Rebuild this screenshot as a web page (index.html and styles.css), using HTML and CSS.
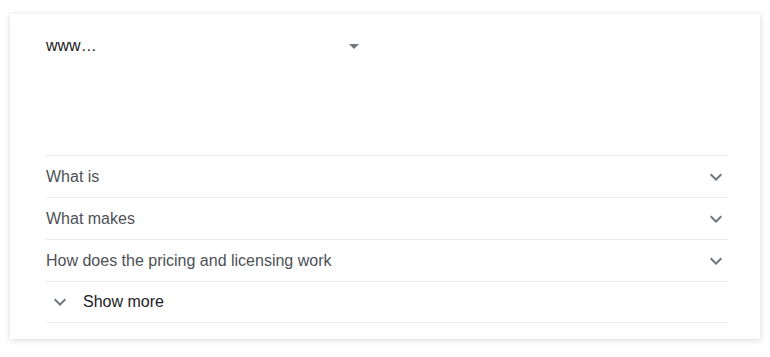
FILE: index.html
```html
<!DOCTYPE html>
<html lang="en">
<head>
    <meta charset="UTF-8">
    <title>People also ask</title>
    <link rel="stylesheet" href="styles.css">
</head>
<body>
    <div class="card">
        <div class="top">
            <div class="source">
                <span class="url">www…</span>
                <span class="caret"></span>
            </div>
        </div>

        <div class="faq">
            <div class="faq-row">
                <span class="question">What is</span>
                <svg class="chevron" width="24" height="24" viewBox="0 0 24 24"><path d="M7.4 8.6L12 13.2l4.6-4.6L18 10l-6 6-6-6z"/></svg>
            </div>
            <div class="faq-row">
                <span class="question">What makes</span>
                <svg class="chevron" width="24" height="24" viewBox="0 0 24 24"><path d="M7.4 8.6L12 13.2l4.6-4.6L18 10l-6 6-6-6z"/></svg>
            </div>
            <div class="faq-row">
                <span class="question">How does the pricing and licensing work</span>
                <svg class="chevron" width="24" height="24" viewBox="0 0 24 24"><path d="M7.4 8.6L12 13.2l4.6-4.6L18 10l-6 6-6-6z"/></svg>
            </div>
            <div class="faq-row more">
                <svg class="chevron" width="24" height="24" viewBox="0 0 24 24"><path d="M7.4 8.6L12 13.2l4.6-4.6L18 10l-6 6-6-6z"/></svg>
                <span class="more-label">Show more</span>
            </div>
        </div>
    </div>
</body>
</html>
```

FILE: styles.css
```css
/* 基础样式 */
body {
    margin: 0;
    padding: 14px 10px;
    background: #ffffff;
    font-family: Arial, "Liberation Sans", sans-serif;
}

.card {
    width: 750px;
    height: 325px;
    box-sizing: border-box;
    padding: 0 32px 0 36px;
    background: #ffffff;
    box-shadow: 0 1px 6px rgba(32, 33, 36, 0.18);
}

.top {
    height: 141px;
    box-sizing: border-box;
    padding-top: 22px;
}

.source {
    display: flex;
    align-items: center;
    height: 20px;
}

.url {
    font-size: 16px;
    color: #202124;
    width: 303px;
}

.caret {
    width: 0;
    height: 0;
    border-left: 5px solid transparent;
    border-right: 5px solid transparent;
    border-top: 5px solid #70757a;
}

.faq-row {
    display: flex;
    align-items: center;
    justify-content: space-between;
    height: 41px;
    border-top: 1px solid #ebebeb;
}

.faq-row:last-child {
    height: 40px;
    border-bottom: 1px solid #ebebeb;
    justify-content: flex-start;
}

.question {
    font-size: 16px;
    color: #4d5156;
    padding-top: 1px;
}

.chevron {
    fill: #70757a;
    margin-right: 0;
}

.more .chevron {
    margin: 0 11px 0 2px;
}

.more-label {
    font-size: 16px;
    color: #202124;
}
```
